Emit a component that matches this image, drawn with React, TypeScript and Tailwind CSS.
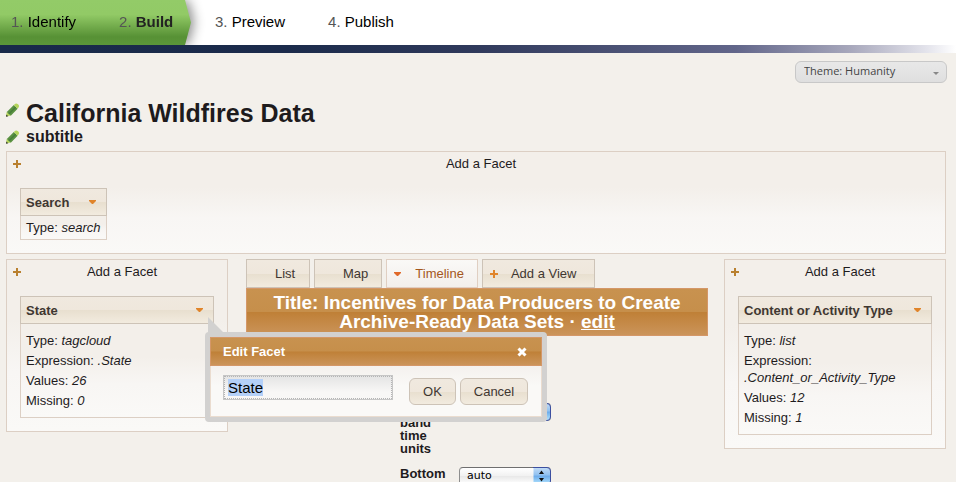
import { useEffect, useRef } from "react";
import type { ReactNode } from "react";

const headerFill =
  "bg-[linear-gradient(#f0e9df_0%,#efe7dc_50%,#e8dfcf_51%,#f2ebdf_100%)]";
const panelFill =
  "bg-[linear-gradient(#f3efea_0%,#f3efea_35%,#f8f6f4_65%,#faf9f7_100%)]";
const glossFill =
  "bg-[linear-gradient(#c8924f_0%,#c68f4b_49%,#bf8037_51%,#cb945a_100%)]";

function Plus({ className = "text-[#b9802f]" }: { className?: string }) {
  return (
    <svg className={`size-2 shrink-0 ${className}`} viewBox="0 0 8 8" aria-hidden="true">
      <path d="M3 0h2v3h3v2H5v3H3V5H0V3h3z" fill="currentColor" />
    </svg>
  );
}

function Caret({ className = "text-[#e0842a]" }: { className?: string }) {
  return (
    <svg className={`h-1 w-[7px] shrink-0 ${className}`} viewBox="0 0 7 4" aria-hidden="true">
      <path d="M0 0h7v1L4 4H3L0 1z" fill="currentColor" />
    </svg>
  );
}

function Pencil({ label }: { label: string }) {
  return (
    <button type="button" aria-label={label} className="shrink-0">
      <svg className="block h-[14px] w-[13px]" viewBox="0 0 13 14" aria-hidden="true">
        <path d="M0 13.500 0.800 8.800 4.800 12.600z" fill="#b4d45a" />
        <path d="M0 13.800 0.300 11.400 2.300 13.300z" fill="#333" />
        <path d="M0.800 9 7.800 2 11.600 5.800 4.800 12.700z" fill="#5a9142" />
        <path d="M2.800 11 9.800 4" stroke="#477d38" strokeWidth="1.4" />
        <path d="M7.800 2 9.300 0.700Q10.500 0 12 1.200T12.800 4L11.600 5.800z" fill="#b4d45a" />
      </svg>
    </button>
  );
}

function Step({ n, name, current }: { n: number; name: string; current?: boolean }) {
  return (
    <a href="#" className="whitespace-nowrap text-black">
      <span className="text-[#555]">{n}.</span>{" "}
      {current ? <strong className="text-[#222]">{name}</strong> : name}
    </a>
  );
}

function Steps() {
  return (
    <header className="bg-white">
      <nav aria-label="Steps" className="flex h-[45px] text-[15px]">
        <div className="h-full w-[191px] shrink-0 drop-shadow-[3px_0_6px_rgba(0,0,0,0.45)] [clip-path:inset(0_-16px_0_0)]">
          <div className="flex h-full items-center gap-[43px] bg-[linear-gradient(#93cb68_0%,#92ca66_32%,#579135_82%,#5b9739_100%)] pb-[2px] pl-[11px] [clip-path:polygon(0_0,185px_0,191px_50%,185px_100%,0_100%)]">
            <Step n={1} name="Identify" />
            <Step n={2} name="Build" current />
          </div>
        </div>
        <div className="flex items-center gap-[43px] pb-[2px] pl-6">
          <Step n={3} name="Preview" />
          <Step n={4} name="Publish" />
        </div>
      </nav>
      <div className="h-2 bg-[linear-gradient(90deg,#192a4a_0%,#1b2b4b_30%,#303a5c_50%,#62668a_77%,#a8a8bc_89%,#e4e4ec_97%,#fff_100%)]" />
    </header>
  );
}

function Entry({ name, value }: { name: string; value: string }) {
  return (
    <p>
      {name}: <em>{value}</em>
    </p>
  );
}

function Facet({
  title,
  roomy,
  overlay,
  children,
}: {
  title: string;
  roomy?: boolean;
  overlay?: ReactNode;
  children: ReactNode;
}) {
  return (
    <section className="relative">
      <div
        className={`flex h-7 items-center justify-between gap-5 border border-[#cdc3b7] pr-[10px] pl-[5px] ${headerFill}`}
      >
        <h3 className="font-bold text-[#3f3731]">{title}</h3>
        <button type="button" aria-label={`${title} menu`}>
          <Caret />
        </button>
      </div>
      <div
        className={`flex flex-col gap-[3px] border border-t-0 border-[#dccfc4] px-[5px] ${panelFill} ${roomy ? "py-2" : "py-[3px]"}`}
      >
        {children}
      </div>
      {overlay}
    </section>
  );
}

function FacetPanel({ className = "", children }: { className?: string; children: ReactNode }) {
  return (
    <div className={`border border-[#dccfc4] px-[13px] pb-[13px] ${panelFill} ${className}`}>
      <button type="button" className="-mx-[7px] flex h-[23px] items-center">
        <Plus />
      </button>
      <p className="-mt-5 mb-[16px] pl-[10px] text-center">Add a Facet</p>
      {children}
    </div>
  );
}

function EditDialog() {
  const input = useRef<HTMLInputElement>(null);
  useEffect(() => {
    input.current?.focus();
    input.current?.select();
  }, []);
  const button = `h-[27px] rounded-md border border-[#cdc3b7] text-[#3f3731] ${headerFill}`;
  return (
    <div
      role="dialog"
      aria-label="Edit Facet"
      className="absolute top-9 left-[185px] z-10 w-[342px] rounded-[4px] border-[5px] border-[#d2d1d0]"
    >
      <svg
        className="absolute -top-5 -left-[2px] h-4 w-4 text-[#d2d1d0]"
        viewBox="0 0 16 16"
        aria-hidden="true"
      >
        <path d="M0 0v16h16z" fill="currentColor" />
      </svg>
      <div
        className={`flex h-[29px] items-center justify-between border border-[#d49768] pr-[14px] pl-3 text-white ${glossFill}`}
      >
        <h2 className="font-bold">Edit Facet</h2>
        <button type="button" aria-label="Close">
          <svg className="size-[10px]" viewBox="0 0 10 10" aria-hidden="true">
            <path d="M1.500 1.500l7 7M8.500 1.500l-7 7" stroke="currentColor" strokeWidth="3" />
          </svg>
        </button>
      </div>
      <form
        className="flex h-[51px] items-start border border-t-0 border-[#eadccf] bg-[linear-gradient(#f4f1ee,#faf9f7_40%)] pl-3"
        onSubmit={(e) => e.preventDefault()}
      >
        <input
          ref={input}
          aria-label="Facet name"
          defaultValue="State"
          className="mt-[9px] h-[25px] w-[170px] border border-[#c6c6c6] bg-[linear-gradient(#e4e4e4,#f8f7f6_70%)] px-1 text-[15px] text-black outline-1 -outline-offset-2 outline-[#b5b5b5] outline-dotted selection:bg-[#b4d0f8] selection:text-black"
        />
        <button type="submit" className={`mt-3 ml-4 w-[47px] ${button}`}>
          OK
        </button>
        <button type="button" className={`mt-3 ml-1 w-[68px] ${button}`}>
          Cancel
        </button>
      </form>
    </div>
  );
}

function Tab({
  name,
  active,
  wide,
  icon,
}: {
  name: string;
  active?: boolean;
  wide?: boolean;
  icon?: ReactNode;
}) {
  return (
    <button
      type="button"
      className={`flex h-[29px] min-w-16 items-center border pl-[7px] ${wide ? "pr-[18px]" : "pr-[13px]"} ${
        active
          ? "border-[#e0cfc2] bg-[linear-gradient(#faf9f7,#f3efec)] text-[#a4571d]"
          : `border-[#cdc3b7] text-[#3f3731] ${headerFill}`
      }`}
    >
      <span className="flex w-[21px]">{icon}</span>
      {name}
    </button>
  );
}

function UnitRow({ label }: { label: string }) {
  const id = label.split(" ").join("-").toLowerCase();
  return (
    <div className="flex items-start">
      <label htmlFor={id} className="w-[59px] pr-2 leading-[13px] font-bold">
        {label}
      </label>
      <div className="relative">
        <select
          id={id}
          className="block h-[18px] w-[92px] appearance-none rounded-[4px] border border-[#8e8e8e] border-t-[#6f6f6f] bg-[linear-gradient(#fff,#f1f1f1_50%,#e8e8e8_51%,#fff)] pl-[7px] font-['DejaVu_Sans',sans-serif] text-[11px] leading-4 text-black"
        >
          <option>auto</option>
        </select>
        <svg
          className="pointer-events-none absolute top-0 right-0 h-[18px] w-[18px]"
          viewBox="0 0 18 18"
          aria-hidden="true"
        >
          <defs>
            <linearGradient id={`${id}-cap`} x1="0" y1="0" x2="0" y2="1">
              <stop offset="0" stopColor="#c3dcf6" />
              <stop offset="0.45" stopColor="#8fc0f0" />
              <stop offset="0.5" stopColor="#6cabea" />
              <stop offset="1" stopColor="#b8e8ff" />
            </linearGradient>
          </defs>
          <path d="M.5.5H14Q17.5.5 17.5 4v10q0 3.500-3.500 3.500H.5z" fill={`url(#${id}-cap)`} />
          <path d="M0 .5H14Q17.500.5 17.500 4v10q0 3.500-3.500 3.500H0" fill="none" stroke="#3c4fa0" />
          <path d="M8.500 3.500 11 7H6zM8.500 14.500 11 11H6z" fill="#111" />
        </svg>
      </div>
    </div>
  );
}

export default function App() {
  return (
    <div className="h-screen overflow-hidden bg-[#f3f0eb] font-['Liberation_Sans',Arial,sans-serif] text-[13px] leading-[17px] text-[#1e1b1d]">
      <Steps />
      <main className="pr-[10px] pl-[6px]">
        <div className="-mr-px flex justify-end pt-2">
          <div className="relative">
            <select
              aria-label="Theme"
              className="block h-[22px] w-[152px] appearance-none rounded-md border border-[#c8c8c8] bg-[linear-gradient(#e8e8e8,#dfdfdf)] pb-[2px] pl-2 font-['Open_Sans',sans-serif] text-[11px] leading-4 text-[#444]"
            >
              <option>Theme: Humanity</option>
            </select>
            <svg
              className="pointer-events-none absolute top-[11px] right-2 h-[3px] w-[6px]"
              viewBox="0 0 6 3"
              aria-hidden="true"
            >
              <path d="M0 0h6L3 3z" fill="#888" />
            </svg>
          </div>
        </div>

        <div className="mt-4 flex items-center gap-[7px]">
          <span className="-mt-[2px]">
            <Pencil label="Edit title" />
          </span>
          <h1 className="text-[25px] leading-7 font-bold">California Wildfires Data</h1>
        </div>
        <div className="flex items-center gap-[7px]">
          <Pencil label="Edit subtitle" />
          <h2 className="text-base leading-5 font-bold">subtitle</h2>
        </div>

        <FacetPanel className="mt-1">
          <div className="flex">
            <Facet title="Search">
              <Entry name="Type" value="search" />
            </Facet>
          </div>
        </FacetPanel>

        <div className="mt-[5px] flex items-start">
          <FacetPanel className="w-[222px] shrink-0">
            <Facet title="State" roomy overlay={<EditDialog />}>
              <Entry name="Type" value="tagcloud" />
              <Entry name="Expression" value=".State" />
              <Entry name="Values" value="26" />
              <Entry name="Missing" value="0" />
            </Facet>
          </FacetPanel>

          <div className="mr-4 ml-[18px] min-w-0 flex-1">
            <div className="flex gap-1">
              <Tab name="List" />
              <Tab name="Map" />
              <Tab name="Timeline" active icon={<Caret className="text-[#e0692a]" />} />
              <Tab name="Add a View" wide icon={<Plus className="text-[#e0842a]" />} />
            </div>
            <h2
              className={`border border-[#d49768] px-5 py-[4px] text-center text-[19px] leading-[19px] font-bold text-white ${glossFill}`}
            >
              Title: Incentives for Data Producers to Create Archive-Ready Data Sets ·{" "}
              <a href="#" className="underline">
                edit
              </a>
            </h2>
            <div className="mt-[67px] ml-[154px] flex flex-col gap-3">
              <UnitRow label="Top band time units" />
              <UnitRow label="Bottom band time units" />
            </div>
          </div>

          <FacetPanel className="w-[222px] shrink-0">
            <Facet title="Content or Activity Type" roomy>
              <Entry name="Type" value="list" />
              <Entry name="Expression" value=".Content_or_Activity_Type" />
              <Entry name="Values" value="12" />
              <Entry name="Missing" value="1" />
            </Facet>
          </FacetPanel>
        </div>
      </main>
    </div>
  );
}
